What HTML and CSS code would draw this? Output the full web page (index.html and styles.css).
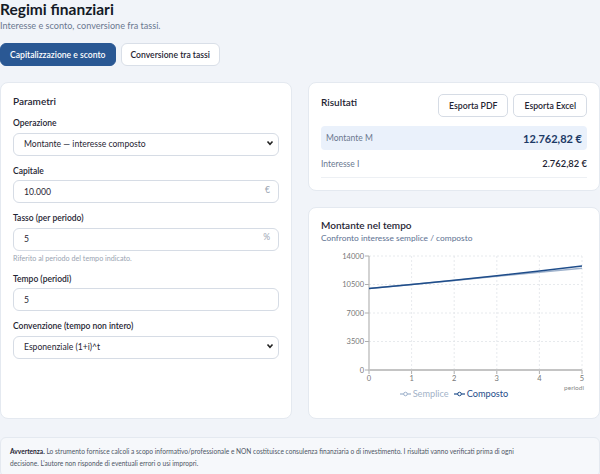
FILE: index.html
```html
<!DOCTYPE html>
<html lang="it">
<head>
  <meta charset="UTF-8">
  <title>Regimi finanziari</title>
  <link rel="stylesheet" href="styles.css">
</head>
<body>
  <div class="page">
    <h1 class="title">Regimi finanziari</h1>
    <p class="subtitle">Interesse e sconto, conversione fra tassi.</p>

    <div class="tabs">
      <button class="tab active">Capitalizzazione e sconto</button>
      <button class="tab">Conversione tra tassi</button>
    </div>

    <div class="layout">
      <!-- parametri -->
      <section class="card params">
        <h2 class="card-title">Parametri</h2>

        <div class="field">
          <label>Operazione</label>
          <div class="control">
            <select class="input select">
              <option>Montante — interesse composto</option>
            </select>
            <svg class="chevron" width="8" height="6" viewBox="0 0 8 6"><path d="M1.5 1.5 L4 4.2 L6.5 1.5" fill="none" stroke="#222" stroke-width="1.6"/></svg>
          </div>
        </div>

        <div class="field">
          <label>Capitale</label>
          <div class="control">
            <input class="input" value="10.000">
            <span class="suffix">€</span>
          </div>
        </div>

        <div class="field">
          <label>Tasso (per periodo)</label>
          <div class="control">
            <input class="input" value="5">
            <span class="suffix">%</span>
          </div>
          <p class="hint">Riferito al periodo del tempo indicato.</p>
        </div>

        <div class="field">
          <label>Tempo (periodi)</label>
          <div class="control">
            <input class="input" value="5">
          </div>
        </div>

        <div class="field">
          <label>Convenzione (tempo non intero)</label>
          <div class="control">
            <select class="input select">
              <option>Esponenziale (1+i)^t</option>
            </select>
            <svg class="chevron" width="8" height="6" viewBox="0 0 8 6"><path d="M1.5 1.5 L4 4.2 L6.5 1.5" fill="none" stroke="#222" stroke-width="1.6"/></svg>
          </div>
        </div>
      </section>

      <div class="side">
        <!-- risultati -->
        <section class="card results">
          <div class="results-head">
            <h2 class="card-title">Risultati</h2>
            <div class="actions">
              <button class="btn">Esporta PDF</button>
              <button class="btn">Esporta Excel</button>
            </div>
          </div>
          <div class="row main">
            <span class="row-label">Montante M</span>
            <span class="row-value">12.762,82 €</span>
          </div>
          <div class="row">
            <span class="row-label">Interesse I</span>
            <span class="row-value">2.762,82 €</span>
          </div>
        </section>

        <!-- grafico -->
        <section class="card chart-card">
          <h2 class="card-title">Montante nel tempo</h2>
          <p class="chart-sub">Confronto interesse semplice / composto</p>
          <svg class="chart" width="268" height="146" viewBox="0 0 268 146">
            <g stroke="#e1e4e8" stroke-width="0.8" stroke-dasharray="2 2">
              <line x1="48" y1="8" x2="261" y2="8"/>
              <line x1="48" y1="36.5" x2="261" y2="36.5"/>
              <line x1="48" y1="65" x2="261" y2="65"/>
              <line x1="48" y1="93.5" x2="261" y2="93.5"/>
              <line x1="90.6" y1="8" x2="90.6" y2="122"/>
              <line x1="133.2" y1="8" x2="133.2" y2="122"/>
              <line x1="175.8" y1="8" x2="175.8" y2="122"/>
              <line x1="218.4" y1="8" x2="218.4" y2="122"/>
              <line x1="261" y1="8" x2="261" y2="122"/>
            </g>
            <g stroke="#9a9a9a" stroke-width="0.8">
              <line x1="44" y1="8" x2="48" y2="8"/>
              <line x1="44" y1="36.5" x2="48" y2="36.5"/>
              <line x1="44" y1="65" x2="48" y2="65"/>
              <line x1="44" y1="93.5" x2="48" y2="93.5"/>
              <line x1="44" y1="122" x2="48" y2="122"/>
              <line x1="48" y1="122" x2="48" y2="126"/>
              <line x1="90.6" y1="122" x2="90.6" y2="126"/>
              <line x1="133.2" y1="122" x2="133.2" y2="126"/>
              <line x1="175.8" y1="122" x2="175.8" y2="126"/>
              <line x1="218.4" y1="122" x2="218.4" y2="126"/>
              <line x1="261" y1="122" x2="261" y2="126"/>
            </g>
            <line x1="48" y1="8" x2="48" y2="122" stroke="#b5b5b5" stroke-width="1.2"/>
            <line x1="48" y1="122" x2="261" y2="122" stroke="#c4c4c4" stroke-width="2"/>
            <g class="axis-text" text-anchor="end">
              <text x="43" y="10.5">14000</text>
              <text x="43" y="39">10500</text>
              <text x="43" y="67.5">7000</text>
              <text x="43" y="96">3500</text>
              <text x="43" y="124.5">0</text>
            </g>
            <g class="axis-text" text-anchor="middle">
              <text x="48" y="133">0</text>
              <text x="90.6" y="133">1</text>
              <text x="133.2" y="133">2</text>
              <text x="175.8" y="133">3</text>
              <text x="218.4" y="133">4</text>
              <text x="261" y="133">5</text>
            </g>
            <text class="axis-unit" x="263" y="142" text-anchor="end">periodi</text>
            <polyline fill="none" stroke="#9fb2cc" stroke-width="1.5" points="48,40.57 90.6,36.5 133.2,32.43 175.8,28.36 218.4,24.29 261,20.21"/>
            <polyline fill="none" stroke="#1f4d8a" stroke-width="1.5" points="48,40.57 90.6,36.5 133.2,32.22 175.8,27.74 218.4,23.02 261,18.07"/>
          </svg>
          <div class="legend">
            <span class="legend-item simple">
              <svg width="11" height="6" viewBox="0 0 11 6"><line x1="0" y1="3" x2="11" y2="3" stroke="#9fb2cc" stroke-width="1.2"/><circle cx="5.5" cy="3" r="1.8" fill="#fff" stroke="#9fb2cc" stroke-width="1"/></svg>
              Semplice
            </span>
            <span class="legend-item compound">
              <svg width="11" height="6" viewBox="0 0 11 6"><line x1="0" y1="3" x2="11" y2="3" stroke="#1f4d8a" stroke-width="1.2"/><circle cx="5.5" cy="3" r="1.8" fill="#fff" stroke="#1f4d8a" stroke-width="1"/></svg>
              Composto
            </span>
          </div>
        </section>
      </div>
    </div>

    <div class="notice">
      <p><strong>Avvertenza.</strong> Lo strumento fornisce calcoli a scopo informativo/professionale e NON costituisce consulenza finanziaria o di investimento. I risultati vanno verificati prima di ogni decisione. L'autore non risponde di eventuali errori o usi impropri.</p>
    </div>
  </div>
</body>
</html>
```

FILE: styles.css
```css
html, body {
  margin: 0;
  padding: 0;
  background: #f1f4f9;
}

body {
  font-family: Lato, "Noto Sans", sans-serif;
  color: #1f2533;
}

.page {
  width: 600px;
}

.title {
  margin: 0;
  font-size: 15.5px;
  line-height: 19px;
  font-weight: 700;
  color: #141a26;
}

.subtitle {
  margin: 0;
  font-size: 9.1px;
  line-height: 13px;
  color: #6b7890;
}

.tabs {
  display: flex;
  gap: 5px;
  margin-top: 11px;
}

.tab {
  height: 23px;
  padding: 0 9px;
  border: 1px solid #d9dfe8;
  border-radius: 6px;
  background: #fff;
  font-family: inherit;
  font-size: 8.6px;
  font-weight: 600;
  color: #1f2533;
}

.tab.active {
  background: #2a5894;
  border-color: #2a5894;
  color: #fff;
}

.layout {
  display: grid;
  grid-template-columns: 292px 292px;
  gap: 16px;
  margin-top: 16px;
  height: 337px;
}

.card {
  box-sizing: border-box;
  background: #fff;
  border: 1px solid #e4e9f0;
  border-radius: 8px;
  padding: 11px 12px 12px;
}

.card-title {
  margin: 0;
  font-size: 10px;
  line-height: 14px;
  font-weight: 600;
  color: #1f2533;
}

/* parametri */
.field {
  margin-top: 8px;
}

.field label {
  display: block;
  font-size: 8.5px;
  line-height: 14px;
  font-weight: 600;
  margin-bottom: 1px;
}

.control {
  position: relative;
}

.input {
  box-sizing: border-box;
  width: 100%;
  height: 23px;
  padding: 0 10px;
  border: 1px solid #d6dce5;
  border-radius: 6px;
  background: #fff;
  font-family: inherit;
  font-size: 8.6px;
  color: #1f2533;
  outline: none;
}

.select {
  appearance: none;
  -webkit-appearance: none;
}

.chevron {
  position: absolute;
  right: 5px;
  top: 9px;
}

.suffix {
  position: absolute;
  right: 9px;
  top: 6px;
  font-size: 8.5px;
  color: #9aa4b2;
}

.hint {
  margin: 3px 0 0;
  font-size: 7.2px;
  line-height: 10px;
  color: #9aa4b2;
}

/* risultati */
.side {
  display: flex;
  flex-direction: column;
  gap: 16px;
}

.results-head {
  display: flex;
  justify-content: space-between;
  align-items: flex-start;
}

.results-head .card-title {
  margin-top: 1px;
}

.actions {
  display: flex;
  gap: 5px;
}

.btn {
  height: 23px;
  padding: 0 10px;
  border: 1px solid #d6dce5;
  border-radius: 5px;
  background: #fff;
  font-family: inherit;
  font-size: 8.7px;
  font-weight: 600;
  color: #1f2533;
}

.row {
  display: flex;
  justify-content: space-between;
  align-items: center;
  height: 27px;
  border-bottom: 1px solid #edf0f4;
}

.row.main {
  margin-top: 9px;
  height: 24px;
  padding: 0 5px;
  background: #eaf1fb;
  border-bottom: none;
  border-radius: 4px;
}

.row-label {
  font-size: 8.5px;
  color: #6b7890;
}

.row-value {
  font-size: 9.4px;
  font-weight: 600;
  color: #1f2533;
}

.row.main .row-value {
  font-size: 11px;
  font-weight: 700;
  color: #1c3a66;
}

/* grafico */
.chart-card {
  flex: 1;
  padding-top: 10px;
}

.chart-sub {
  margin: 0;
  font-size: 8.4px;
  line-height: 13px;
  color: #5d7192;
}

.chart {
  display: block;
  margin-top: 3px;
}

.axis-text {
  font-size: 7.5px;
  fill: #777;
}

.axis-unit {
  font-size: 6.5px;
  fill: #888;
}

.legend {
  display: flex;
  justify-content: center;
  gap: 5px;
  margin-top: -7px;
  font-size: 9.2px;
  line-height: 14px;
}

.legend-item {
  display: flex;
  align-items: center;
  gap: 2px;
}

.legend-item.simple {
  color: #a3b3c8;
}

.legend-item.compound {
  color: #1f4d8a;
}

/* avvertenza */
.notice {
  margin-top: 18px;
  padding: 7px 9px;
  background: #f6f8fb;
  border: 1px solid #e4e9f0;
  border-radius: 6px;
}

.notice p {
  margin: 0;
  max-width: 512px;
  font-size: 6.6px;
  line-height: 12px;
  color: #4d5665;
}

.notice strong {
  font-weight: 700;
  color: #1f2533;
}
```
